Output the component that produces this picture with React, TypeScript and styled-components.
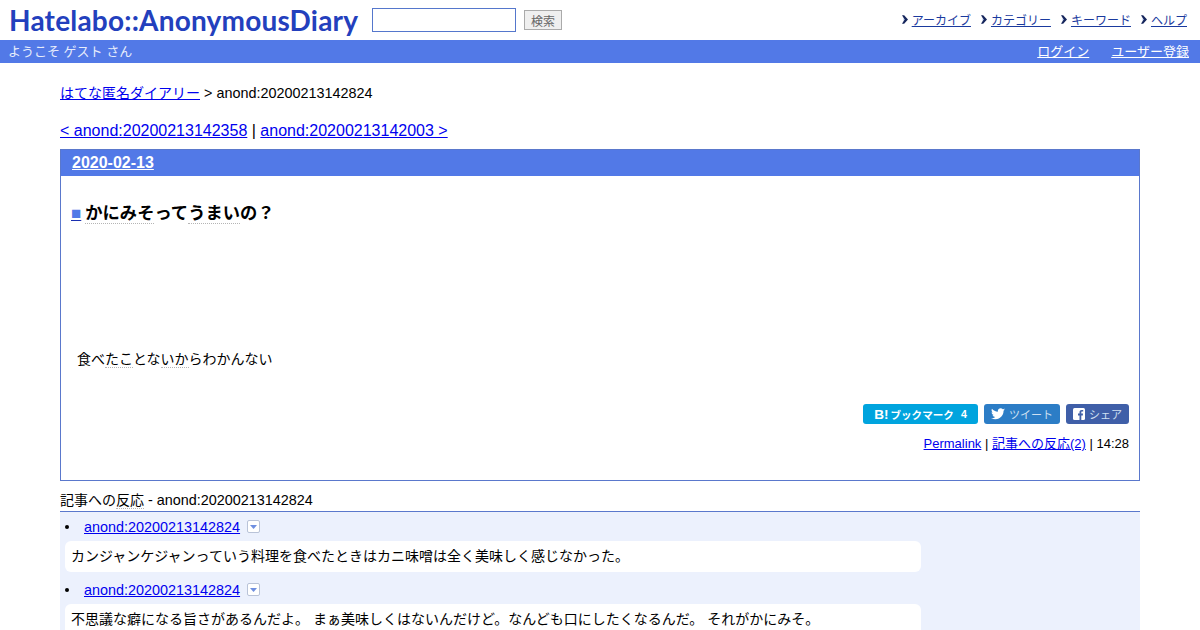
import React from "react";
import styled, { createGlobalStyle } from "styled-components";

const cjk = `"Liberation Sans", "Noto Sans CJK JP", sans-serif`;

const Global = createGlobalStyle`
  html, body { margin: 0; padding: 0; height: 630px; overflow: hidden; background: #fff; }
  body { font-family: ${cjk}; font-size: 14.4px; color: #000; }
`;

const Page = styled.div`
  width: 1200px;
  height: 630px;
  overflow: hidden;
`;

const Header = styled.header`
  height: 40px;
  display: flex;
  align-items: center;
  padding: 0 13px 0 9px;
`;

const Logo = styled.a`
  width: 350px;
  font-family: "Lato", sans-serif;
  font-weight: 700;
  font-size: 28px;
  line-height: 40px;
  color: #2340bd;
  white-space: nowrap;
  letter-spacing: 0.2px;
`;

const SearchForm = styled.form`
  display: flex;
  align-items: center;
  margin-left: 13px;
  gap: 8px;
`;

const SearchInput = styled.input`
  box-sizing: border-box;
  width: 144px;
  height: 24px;
  border: 1px solid #5577cc;
  background: #fff;
  padding: 0 4px;
`;

const SearchButton = styled.button`
  box-sizing: border-box;
  width: 38px;
  height: 20px;
  border: 1px solid #aaa;
  background: #efefef;
  color: #666;
  font: 12px ${cjk};
  padding: 0;
`;

const TopNav = styled.nav`
  margin-left: auto;
  display: flex;
  gap: 10px;
  font-size: 12px;
  padding-bottom: 2px;
`;

const TopNavItem = styled.span`
  display: flex;
  align-items: center;
  gap: 4px;
`;

const TopNavLink = styled.a`
  color: #1a3a9e;
  text-decoration: underline;
`;

const UserBar = styled.div`
  box-sizing: border-box;
  height: 23px;
  background: #5279e7;
  display: flex;
  align-items: center;
  justify-content: space-between;
  padding: 0 11px 2px 8px;
  font-size: 13px;
  color: #e6ecfb;
`;

const UserLinks = styled.div`
  display: flex;
  gap: 22px;
`;

const UserLink = styled.a`
  color: #fff;
  text-decoration: underline;
`;

const Content = styled.main`
  padding: 0 60px;
`;

const Breadcrumb = styled.div`
  margin-top: 21px;
  height: 18px;
  line-height: 18px;
`;

const Link = styled.a`
  color: #0000ee;
  text-decoration: underline;
`;

const Jp = styled.span`
  font-size: 14px;
`;

const Pager = styled.div`
  margin-top: 17px;
  height: 24px;
  line-height: 24px;
  font-size: 16px;
`;

const Day = styled.section`
  box-sizing: border-box;
  margin-top: 6px;
  height: 332px;
  border: 1px solid #5a78cc;
  display: flex;
  flex-direction: column;
`;

const DayHeader = styled.h2`
  margin: 0;
  height: 26px;
  line-height: 25px;
  background: #5279e7;
  padding-left: 11px;
  font-size: 16px;
  font-weight: 700;
`;

const DayLink = styled.a`
  color: #fff;
  text-decoration: underline;
`;

const EntryTitle = styled.h3`
  margin: 25px 0 0 10px;
  height: 24px;
  line-height: 24px;
  font-size: 17.3px;
  font-weight: 700;
  white-space: nowrap;
`;

const Square = styled.a`
  color: #5279e7;
  text-decoration: underline #1a2fb0;
  font-size: 17px;
  margin-right: 4px;
`;

const Keyword = styled.span`
  border-bottom: 1px dotted #b5b5b5;
`;

const EntryBody = styled.p`
  margin: 124px 0 0 16px;
  height: 20px;
  line-height: 20px;
  font-size: 14px;
`;

const Share = styled.div`
  margin-top: 35px;
  display: flex;
  justify-content: flex-end;
  gap: 6px;
  padding-right: 10px;
`;

const ShareButton = styled.a<{ $bg: string; $w: number }>`
  box-sizing: border-box;
  width: ${(p) => p.$w}px;
  height: 20px;
  border-radius: 3px;
  background: ${(p) => p.$bg};
  color: #cfe0f2;
  font-size: 11px;
  display: flex;
  align-items: center;
  justify-content: center;
  gap: 4px;
`;

const BookmarkLabel = styled.span`
  color: #fff;
  font-size: 10.6px;
  font-weight: 700;
  display: flex;
  align-items: center;
  gap: 7px;
`;

const BookmarkMark = styled.b`
  font-size: 13.5px;
  margin-right: -5px;
`;

const EntryFooter = styled.div`
  margin-top: 11px;
  padding-right: 10px;
  text-align: right;
  font-size: 13px;
  line-height: 18px;
`;

const RefHeading = styled.div`
  box-sizing: border-box;
  margin-top: 10px;
  height: 21px;
  line-height: 18px;
  border-bottom: 1px solid #5a78cc;
`;

const RefList = styled.ul`
  margin: 0;
  padding: 3px 0 0 5px;
  list-style: none;
  background: #ecf1fd;
  height: 200px;
`;

const RefItem = styled.li`
  margin-bottom: 6px;
`;

const RefHead = styled.div`
  height: 23px;
  display: flex;
  align-items: center;
  margin-bottom: 3px;
`;

const Bullet = styled.span`
  width: 4px;
  height: 4px;
  border-radius: 50%;
  background: #000;
  margin: 0 15px 0 0;
`;

const RefMenu = styled.span`
  box-sizing: border-box;
  width: 13px;
  height: 13px;
  margin-left: 7px;
  border: 1px solid #b9c3d8;
  border-radius: 2px;
  background: #fff;
  display: flex;
  align-items: center;
  justify-content: center;
`;

const Bubble = styled.div`
  box-sizing: border-box;
  width: 856px;
  height: 31px;
  line-height: 30px;
  padding-left: 6px;
  background: #fff;
  border-radius: 6px;
  font-size: 14px;
  white-space: nowrap;
`;

const Arrow = () => (
  <svg width="6" height="9" viewBox="0 0 7 10">
    <path d="M0 0h2.5L7 5l-4.5 5H0l3-5z" fill="#16265c" />
    <path d="M2 3.5L3.2 5 2 6.5z" fill="#7f9be0" />
  </svg>
);

const TwitterBird = () => (
  <svg width="14" height="12" viewBox="0 0 24 20">
    <path
      fill="#fff"
      d="M24 2.4c-.9.4-1.8.7-2.8.8 1-.6 1.8-1.6 2.2-2.7-1 .6-2 1-3.1 1.2C19.3.7 18 0 16.6 0c-2.7 0-4.9 2.2-4.9 4.9 0 .4 0 .8.1 1.1C7.7 5.8 4.1 3.9 1.7.9c-.4.7-.7 1.6-.7 2.5 0 1.7.9 3.2 2.2 4.1-.8 0-1.6-.2-2.2-.6v.1c0 2.4 1.7 4.4 3.9 4.8-.7.2-1.5.2-2.2.1.6 2 2.4 3.4 4.6 3.4-1.7 1.3-3.8 2.1-6.1 2.1-.4 0-.8 0-1.2-.1C2.2 18.2 4.8 19 7.5 19c9.1 0 14-7.5 14-14v-.6c1-.7 1.8-1.6 2.5-2z"
    />
  </svg>
);

const FacebookMark = () => (
  <svg width="12" height="12" viewBox="0 0 12 12">
    <rect width="12" height="12" rx="1.5" fill="#fff" />
    <path
      fill="#3f5fa8"
      d="M8.3 12V7.4h1.5l.2-1.8H8.3V4.5c0-.5.2-.9.9-.9h1V2c-.2 0-.8-.1-1.4-.1-1.4 0-2.3.8-2.3 2.4v1.3H5v1.8h1.5V12z"
    />
  </svg>
);

const MenuCaret = () => (
  <svg width="7" height="4" viewBox="0 0 7 4">
    <path d="M0 0h7L3.5 4z" fill="#6f8fe0" />
  </svg>
);

const navItems = ["アーカイブ", "カテゴリー", "キーワード", "ヘルプ"];

export default function App() {
  return (
    <Page>
      <Global />
      <Header>
        <Logo>Hatelabo::AnonymousDiary</Logo>
        <SearchForm>
          <SearchInput />
          <SearchButton type="button">検索</SearchButton>
        </SearchForm>
        <TopNav>
          {navItems.map((n) => (
            <TopNavItem key={n}>
              <Arrow />
              <TopNavLink>{n}</TopNavLink>
            </TopNavItem>
          ))}
        </TopNav>
      </Header>
      <UserBar>
        <span>ようこそ ゲスト さん</span>
        <UserLinks>
          <UserLink>ログイン</UserLink>
          <UserLink>ユーザー登録</UserLink>
        </UserLinks>
      </UserBar>
      <Content>
        <Breadcrumb>
          <Link><Jp>はてな匿名ダイアリー</Jp></Link> &gt; anond:20200213142824
        </Breadcrumb>
        <Pager>
          <Link>&lt; anond:20200213142358</Link> | <Link>anond:20200213142003 &gt;</Link>
        </Pager>
        <Day>
          <DayHeader><DayLink>2020-02-13</DayLink></DayHeader>
          <EntryTitle>
            <Square>■</Square>
            <Keyword>かにみそ</Keyword>って<Keyword>うまい</Keyword>の？
          </EntryTitle>
          <EntryBody>
            食べ<Keyword>たこ</Keyword>とな<Keyword>いか</Keyword>らわかんない
          </EntryBody>
          <Share>
            <ShareButton $bg="#00a4de" $w={115}>
              <BookmarkLabel><BookmarkMark>B!</BookmarkMark><span>ブックマーク</span><span>4</span></BookmarkLabel>
            </ShareButton>
            <ShareButton $bg="#2c7dc6" $w={76}><TwitterBird />ツイート</ShareButton>
            <ShareButton $bg="#3f5fa8" $w={63}><FacebookMark />シェア</ShareButton>
          </Share>
          <EntryFooter>
            <Link>Permalink</Link> | <Link>記事への反応(2)</Link> | 14:28
          </EntryFooter>
        </Day>
        <RefHeading>
          <Jp>記事への<Keyword>反応</Keyword></Jp> - anond:20200213142824
        </RefHeading>
        <RefList>
          <RefItem>
            <RefHead>
              <Bullet />
              <Link>anond:20200213142824</Link>
              <RefMenu><MenuCaret /></RefMenu>
            </RefHead>
            <Bubble>カンジャンケジャンっていう料理を食べたときはカニ味噌は全く美味しく感じなかった。</Bubble>
          </RefItem>
          <RefItem>
            <RefHead>
              <Bullet />
              <Link>anond:20200213142824</Link>
              <RefMenu><MenuCaret /></RefMenu>
            </RefHead>
            <Bubble>不思議な癖になる旨さがあるんだよ。 まぁ美味しくはないんだけど。なんども口にしたくなるんだ。 それがかにみそ。</Bubble>
          </RefItem>
        </RefList>
      </Content>
    </Page>
  );
}
